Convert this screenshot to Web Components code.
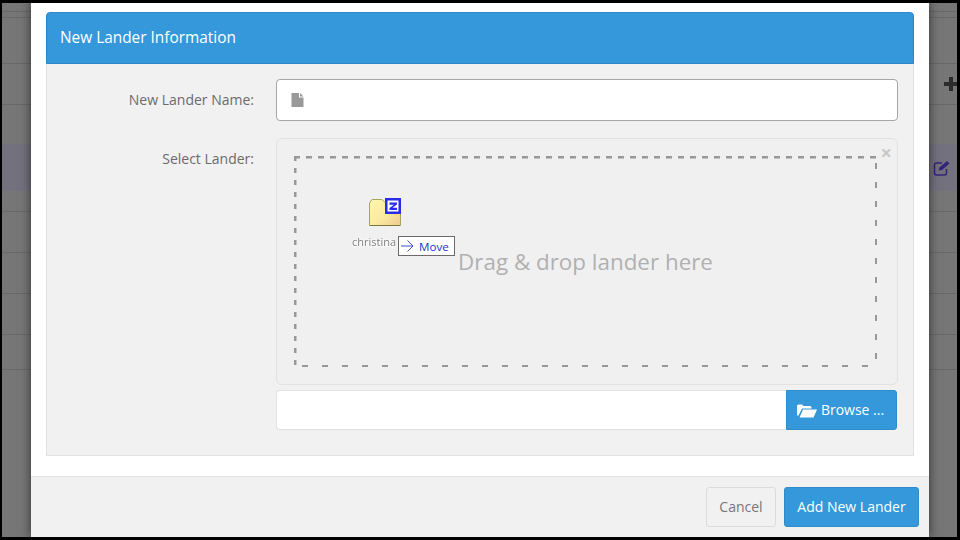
<!DOCTYPE html>
<html lang="en"><head><meta charset="utf-8"><title>New Lander</title>
<style>
html,body{margin:0;padding:0;background:#000;width:960px;height:540px;overflow:hidden;font-family:"Open Sans",sans-serif}
</style></head><body>
<lander-page></lander-page>
<script>
function def(name,css,html,init){
  customElements.define(name,class extends HTMLElement{
    constructor(){super();const r=this.attachShadow({mode:'open'});r.innerHTML='<style>'+css+'</style>'+html;if(init)init(this,r);}
  });
}
def('backdrop-rows',`
:host{display:flex;flex-direction:column;position:absolute;inset:0;background:#767676}
.r{border-bottom:1px solid #686868;box-sizing:border-box;flex:none;display:flex;justify-content:flex-end;align-items:center}
.p{background:#74717e;border-bottom:0}
svg{display:block}
`,`
<div class="r" style="height:9px"></div>
<div class="r" style="height:6px"></div>
<div class="r" style="height:46px"></div>
<div class="r" style="height:41px;"><svg style="margin:0 -1px 0 0;" width="14" height="14" viewBox="0 0 14 14"><path d="M5 0h4v5h5v4H9v5H5V9H0V5h5z" fill="#2b2b2b"/></svg></div>
<div class="r" style="height:39px;border:0"></div>
<div class="r p" style="height:47px"><svg style="margin:0 6px 0 0" width="18" height="16" viewBox="0 0 18 16"><path d="M9 3H3.500A2 2 0 0 0 1.500 5v8a2 2 0 0 0 2 2h8a2 2 0 0 0 2-2V9" fill="none" stroke="#33237a" stroke-width="1.500"/><path d="M5.500 10.500 6.500 7.500 14 1l2.500 2.500-7.500 6.500z" fill="#33237a"/></svg></div>
<div class="r" style="height:21px"></div>
<div class="r" style="height:41px"></div>
<div class="r" style="height:41px"></div>
<div class="r" style="height:41px"></div>
<div class="r" style="height:35px"></div>
`);
def('ui-button',`
:host{display:inline-flex;align-items:center;justify-content:center;box-sizing:border-box;height:40px;border-radius:3px;font-size:14px;font-weight:500;gap:4px;white-space:nowrap;padding-bottom:2px}
:host([kind=primary]){background:#3498db;color:#fff;border:1px solid #2e8ccb;}
:host([kind=plain]){background:#f1f1f1;color:#777;border:1px solid #dcdcdc;font-weight:400}
`,`<slot></slot>`);
def('form-row',`
:host{display:grid;grid-template-columns:207px 1fr;column-gap:22px;align-items:start}
.l{font-size:14px;color:#6b6b6b;text-align:right;line-height:20px;padding-top:var(--lt,11px)}
`,`<div class="l" part="l"><slot name="label"></slot></div><div><slot></slot></div>`);
def('text-field',`
:host{display:flex;align-items:center;box-sizing:border-box;height:42px;background:#fff;border:1px solid #a6a6a6;border-radius:4px;padding-left:14px}
svg{display:block}
`,`<svg width="13" height="14" viewBox="0 0 13 14"><path d="M0.500 0H8v4.500h4.500V14H.5z" fill="#999"/><path d="M9 0l3.500 3.500H9z" fill="#999"/></svg>`);
def('drag-ghost',`
:host{position:absolute;left:75px;top:58px;width:104px;height:62px;display:block}
.folder{position:absolute;left:17px;top:0}
.name{position:absolute;left:0;top:38px;font:11px/14px "Open Sans",sans-serif;color:#7d7d7d;text-shadow:0 0 1px #fff,0 0 2px #fff,0 0 3px #fff,0 1px 2px #fff;width:46px;overflow:hidden;white-space:nowrap;filter:blur(.5px)}
.tip{position:absolute;left:46px;top:39px;box-sizing:border-box;width:57px;height:20px;background:#fff;border:1px solid #6a6a6a;display:flex;align-items:center;gap:5px;padding-left:1px;font:11.6px "Open Sans",sans-serif;color:#1a35d0}
svg{display:block}
`,`
<svg class="folder" width="33" height="33" viewBox="0 0 33 33">
<defs><linearGradient id="g" x1="0" y1="0" x2="1" y2="1"><stop offset="0" stop-color="#fdf5ad"/><stop offset=".55" stop-color="#fbeb9f"/><stop offset="1" stop-color="#f0c890"/></linearGradient></defs>
<path d="M.5 6 3 2.500h10l3 3H31.500V28.500H.5z" fill="url(#g)" stroke="#a6a55c"/>
<path d="M1 28.500h30" stroke="#77773a"/>
<rect x="17.250" y="2.250" width="13.500" height="13.500" fill="#fff" stroke="#2a2ae8" stroke-width="2.500"/>
<path d="M20.500 5.500h7.500v2l-4.500 3.200h4.500v2.300h-7.500v-2l4.500-3.200h-4.500z" fill="#2a2ae8"/>
</svg>
<div class="name">christina</div>
<div class="tip"><svg width="14" height="14" viewBox="0 0 14 14"><path d="M1 7h12M7.500 1.500 13 7l-5.500 5.500" fill="none" stroke="#3a4fc8"/></svg><span>Move</span></div>
`);
def('drop-zone',`
:host{display:block;position:relative;box-sizing:border-box;height:247px;background:#f0f0f0;border:1px solid #e2e2e2;border-radius:6px;padding:17px 20px 17px 17px}
.d{position:relative;box-sizing:border-box;height:211px;display:flex;align-items:center;justify-content:center;color:#b0b0b0;font-size:22.4px}
.d::before{content:"";position:absolute;inset:0;filter:blur(.4px);background:
 repeating-linear-gradient(to right,#989898 0 6px,transparent 6px 12px) 0 0/100% 2.500px no-repeat,
 repeating-linear-gradient(to right,transparent 0 8px,#989898 8px 14px,transparent 14px 20px) 0 100%/100% 2.500px no-repeat,
 repeating-linear-gradient(to bottom,#989898 0 5px,transparent 5px 12px) 0 0/2.500px 100% no-repeat,
 repeating-linear-gradient(to bottom,transparent 0 7px,#989898 7px 13px,transparent 13px 19px) 100% 0/2.500px 100% no-repeat}
.x{position:absolute;right:5px;top:4px;font:700 20px/20px "Open Sans",sans-serif;color:#c8c8c8}
`,`<div class="d"><span>Drag &amp; drop lander here</span></div><div class="x">×</div><drag-ghost></drag-ghost>`);
def('browse-row',`
:host{display:flex;height:40px;margin:5px 1px 0 0}
.f{flex:1;background:#fff;border:1px solid #e2e2e2;border-right:0;border-radius:4px 0 0 4px}
ui-button{width:111px;border-radius:0 3px 3px 0;padding-right:2px}
svg{display:block;margin-right:0;position:relative;top:1px}
`,`<div class="f"></div><ui-button kind="primary"><svg width="20" height="15" viewBox="0 0 20 14"><path d="M0 12V2.500Q0 1 1.500 1H5l1.500 1.500H13q1.500 0 1.500 1.500V5H5L1.500 12z" fill="#fff"/><path d="M2.500 14 6 6h14l-3.500 8z" fill="#fff"/></svg>Browse ...</ui-button>`);
def('info-panel',`
:host{display:block;box-sizing:border-box;height:444px}
.h{box-sizing:border-box;height:52px;background:#3498db;border:1px solid #2e86c4;border-radius:4px 4px 0 0;color:#fff;font-size:15.400px;font-weight:500;padding:0 0 1px 13px;display:flex;align-items:center}
.b{box-sizing:border-box;height:392px;background:#f1f1f1;border:1px solid #e2e2e2;border-top:0;padding:15px 15px 0 0;display:flex;flex-direction:column;gap:17px}
form-row{--lt:11px}
.sel{--lt:11px}
`,`
<div class="h">New Lander Information</div>
<div class="b">
<form-row><span slot="label">New Lander Name:</span><text-field></text-field></form-row>
<form-row class="sel"><span slot="label">Select Lander:</span><drop-zone></drop-zone><browse-row></browse-row></form-row>
</div>`);
def('modal-dialog',`
:host{position:absolute;left:29px;top:0;width:898px;height:534px;background:#fff;display:flex;flex-direction:column;box-shadow:0 0 10px rgba(0,0,0,.6)}
.c{padding:9px 15px 0;height:473px;box-sizing:border-box;flex:none}
.f{flex:1;background:#f1f1f1;border-top:1px solid #e2e2e2;display:flex;justify-content:flex-end;gap:8px;padding:10px 10px 0 0}
.cancel{width:70px}.add{width:135px}
`,`
<div class="c"><info-panel></info-panel></div>
<div class="f"><ui-button class="cancel" kind="plain">Cancel</ui-button><ui-button class="add" kind="primary">Add New Lander</ui-button></div>`);
def('lander-page',`
:host{display:block;position:relative;margin:3px 3px 3px 2px;height:534px;width:955px;overflow:hidden}
`,`<backdrop-rows></backdrop-rows><modal-dialog></modal-dialog>`);
</script>
</body></html>
